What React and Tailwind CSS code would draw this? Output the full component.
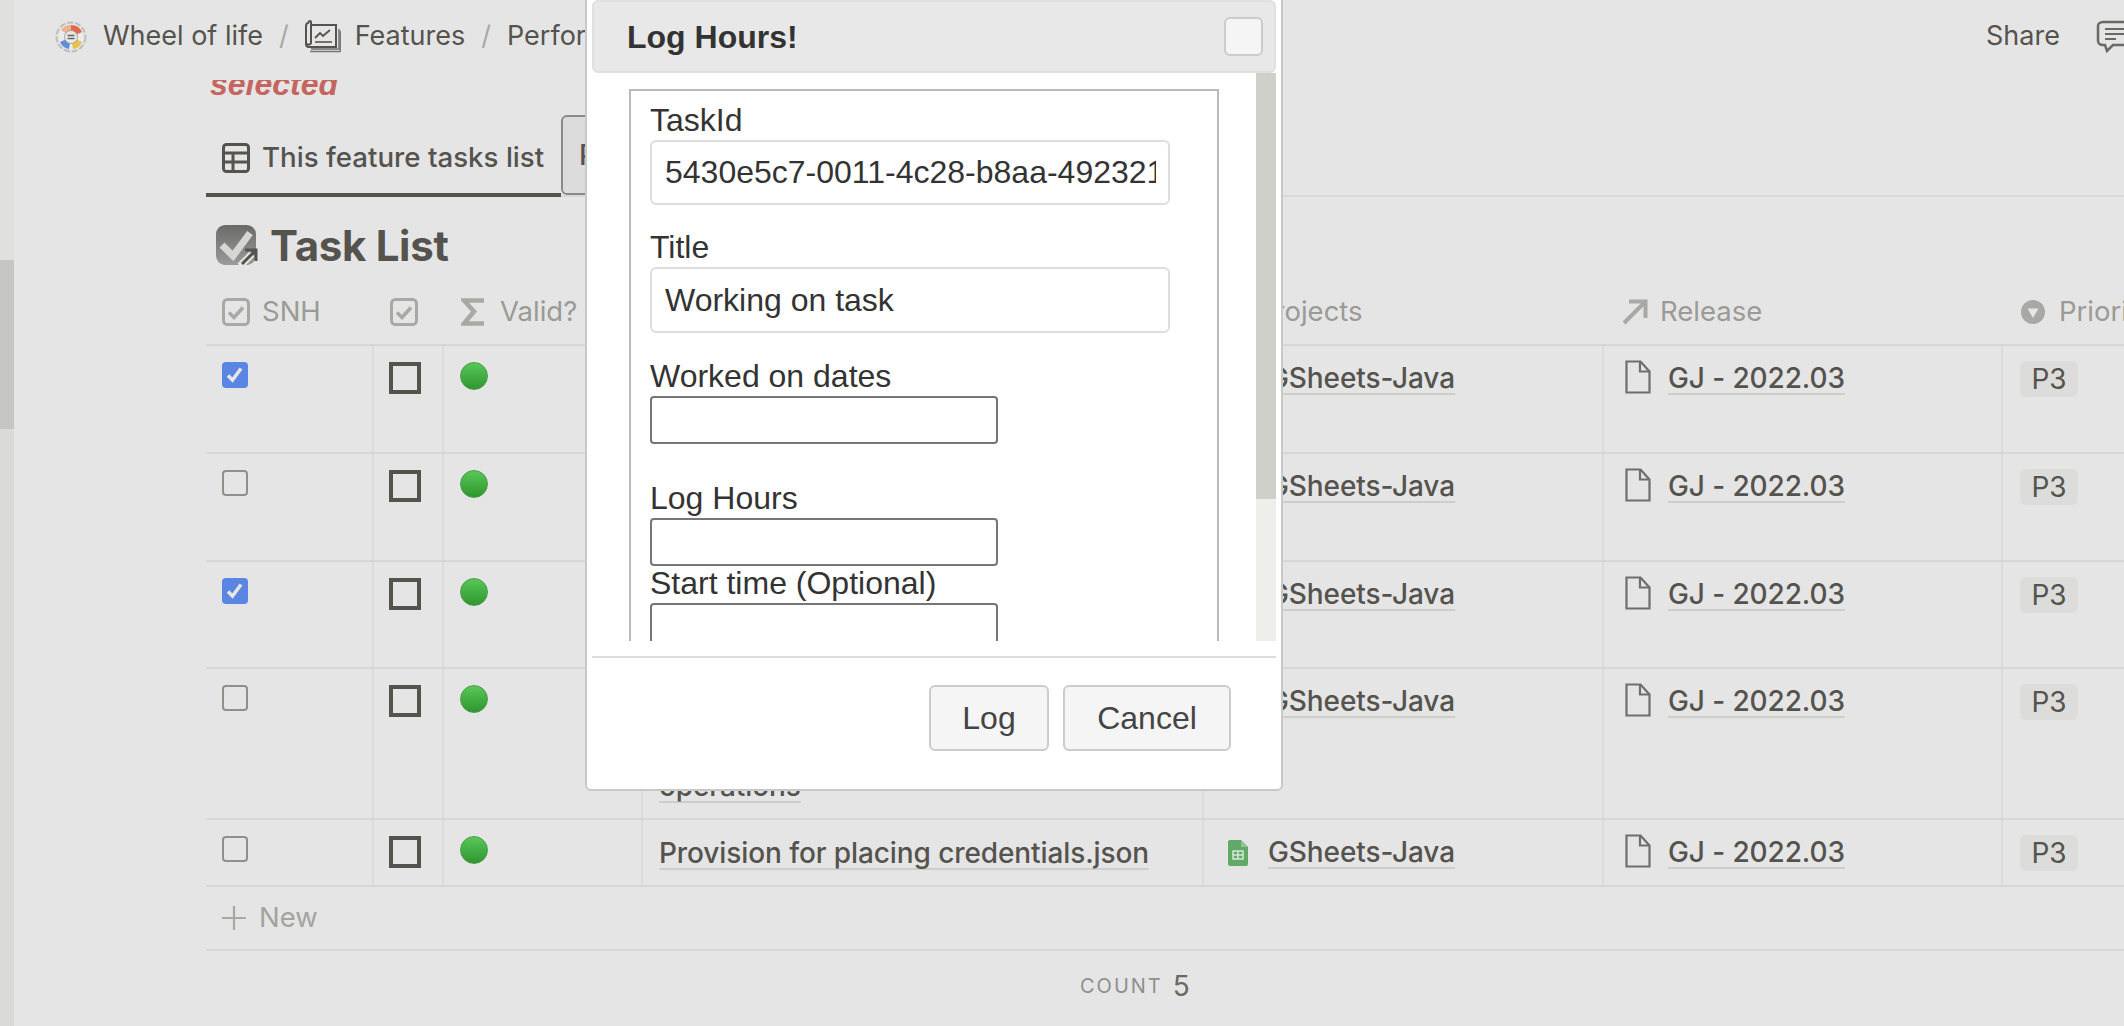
import { useState } from 'react'

const GRID = 'grid grid-cols-[168px_70px_199px_561px_400px_399px_1fr]'
const INTER = "font-['Inter',sans-serif]"
const ARIAL = "font-['Liberation_Sans',Arial,sans-serif]"

const CheckHeadIcon = () => (
  <svg width="28" height="28" viewBox="0 0 28 28" fill="none">
    <rect x="1.5" y="1.5" width="25" height="25" rx="4" stroke="#a8a8a5" strokeWidth="3" />
    <path d="M7 14.5l5 5 9-10" stroke="#a8a8a5" strokeWidth="3.5" />
  </svg>
)

const TableIcon = () => (
  <svg width="28" height="30" viewBox="0 0 28 30" fill="none" stroke="#55534e" strokeWidth="3">
    <rect x="1.5" y="1.5" width="25" height="27" rx="3" />
    <path d="M1.5 10h25M1.5 19h25M11 10v18.5" />
  </svg>
)

const WheelLogo = () => (
  <svg width="32" height="32" viewBox="0 0 32 32">
    <circle cx="16" cy="16" r="14.5" fill="none" stroke="#bdbdbb" strokeWidth="2" strokeDasharray="6 2" />
    <circle cx="16" cy="16" r="12" fill="#ececea" />
    <path d="M16 16L16 4A12 12 0 0 1 27 11Z" fill="#e2674c" />
    <path d="M16 16L6 9A12 12 0 0 1 16 4Z" fill="#efb08e" />
    <path d="M16 16L27 21A12 12 0 0 1 18 28Z" fill="#e9c24e" />
    <path d="M16 16L14 28A12 12 0 0 1 5 21Z" fill="#5f8fd6" />
    <circle cx="16" cy="16" r="6.5" fill="#e8e8e6" stroke="#999" strokeWidth="0.8" />
    <path d="M12.5 14.5h7M12.5 17.5h7" stroke="#666" strokeWidth="1.4" />
  </svg>
)

const FeaturesIcon = () => (
  <svg width="36" height="36" viewBox="0 0 36 36" fill="none">
    <path d="M6 30h28V10" stroke="#8a8a87" strokeWidth="2" />
    <path d="M5 32.5h30.5V12" stroke="#77777a" strokeWidth="1.5" />
    <path d="M3 4c-2 0-2 2-2 4v17c0 2 1 3 3 3h27V6H6V3C6 1.5 4 1.5 3 4Z" fill="#e6e6e6" stroke="#55534e" strokeWidth="2" />
    <path d="M6 6v18c0 1.500-2 2-5 1" stroke="#55534e" strokeWidth="2" />
    <path d="M10 19l5-5 3 3 7-6" stroke="#55534e" strokeWidth="1.8" />
    <path d="M10 23h17" stroke="#55534e" strokeWidth="1.6" />
  </svg>
)

const TaskListIcon = () => (
  <svg width="44" height="42" viewBox="0 0 44 42" fill="none">
    <defs>
      <linearGradient id="taskbox" x1="0" y1="0" x2="0" y2="1">
        <stop offset="0" stopColor="#6a6a68" />
        <stop offset="1" stopColor="#9a9a98" />
      </linearGradient>
    </defs>
    <rect x="0" y="0" width="40" height="40" rx="9" fill="url(#taskbox)" />
    <path d="M6 20l11 11L34 8" stroke="#d6d6d4" strokeWidth="7" />
    <path d="M24 41l12-12" stroke="#e6e6e6" strokeWidth="7" />
    <path d="M26 39l13-13M29 25h11v11" stroke="#55534e" strokeWidth="3" />
  </svg>
)

const SigmaIcon = () => (
  <svg width="24" height="28" viewBox="0 0 24 28" fill="none">
    <path d="M23 2.500H3l10 11L3 25.500h20" stroke="#a8a8a5" strokeWidth="4.500" />
  </svg>
)

const ArrowIcon = () => (
  <svg width="26" height="26" viewBox="0 0 26 26" fill="none">
    <path d="M2 24L23 3M7 2.500h16.500V19" stroke="#a8a8a5" strokeWidth="4" />
  </svg>
)

const PriorityIcon = () => (
  <svg width="24" height="24" viewBox="0 0 24 24">
    <circle cx="12" cy="12" r="12" fill="#a8a8a5" />
    <path d="M6.500 8.500h11L12 18Z" fill="#e6e6e6" />
  </svg>
)

const FileIcon = () => (
  <svg width="26" height="34" viewBox="0 0 26 34" fill="none" stroke="#6f6e6a" strokeWidth="2.200">
    <path d="M1.500 1.500h14l9 10v21h-23Z" />
    <path d="M15 1.500v10h9.500" />
  </svg>
)

const SheetIcon = () => (
  <svg width="20" height="26" viewBox="0 0 20 26">
    <path d="M2 0h11l7 7v17a2 2 0 0 1-2 2H2a2 2 0 0 1-2-2V2a2 2 0 0 1 2-2Z" fill="#62a968" />
    <path d="M13 0l7 7h-7Z" fill="#8fc695" />
    <path d="M5 11h10v8H5ZM5 15h10M10 11v8" fill="none" stroke="#d5e8d6" strokeWidth="1.500" />
  </svg>
)

const CommentIcon = () => (
  <svg width="36" height="34" viewBox="0 0 36 34" fill="none" stroke="#6a6965" strokeWidth="2.500" className="shrink-0">
    <path d="M7 2h24c3 0 4 2 4 4v15c0 2-1 4-4 4H17l-6 6-2-6H7c-3 0-5-2-5-4V6c0-2 2-4 5-4Z" />
    <path d="M9 9h19M9 14h19M9 19h11" strokeWidth="2" />
  </svg>
)

const GreenDot = () => (
  <div className="w-[28px] h-[28px] rounded-full border border-[#4a9d4a] bg-gradient-to-b from-[#57c857] to-[#2f962f]" />
)

const SnhBox = ({ checked }) => checked ? (
  <div className="w-[26px] h-[26px] rounded-[4px] bg-[#5a85e2] flex items-center justify-center">
    <svg width="20" height="20" viewBox="0 0 20 20" fill="none">
      <path d="M3 10.500l4.500 4.500L16 3.500" stroke="#e6e6e6" strokeWidth="3.500" />
    </svg>
  </div>
) : (
  <div className="w-[26px] h-[26px] rounded-[4px] border-2 border-[#8f8f8c]" />
)

const Linked = ({ children }) => (
  <span className="inline-block text-[28px] leading-[30px] tracking-[-0.1px] font-medium text-[#55534e] border-b-2 border-[#cdcdca]">{children}</span>
)

function TaskRow({ row }) {
  const cell = 'border-r-2 border-[#dbdbd9]'
  return (
    <div className={`${GRID} ${row.h} border-b-2 border-[#d6d6d4]`}>
      <div className={`${cell} pl-[16px] pt-[16px]`}><SnhBox checked={row.snh} /></div>
      <div className={`${cell} pl-[15px] pt-[16px]`}>
        <div className="w-[32px] h-[32px] border-[4px] border-[#55534e]" />
      </div>
      <div className={`${cell} pl-[16px] pt-[16px]`}><GreenDot /></div>
      <div className={`${cell} pl-[16px] flex flex-col justify-end pb-[15px]`}>
        {row.title && <div><Linked>{row.title}</Linked></div>}
      </div>
      <div className={`${cell} pl-[24px] pt-[14px]`}>
        <div className="flex items-start gap-[20px]">
          <div className="pt-[6px]"><SheetIcon /></div>
          <div className="pt-[3px]"><Linked>GSheets-Java</Linked></div>
        </div>
      </div>
      <div className={`${cell} pl-[21px] pt-[14px]`}>
        <div className="flex items-start gap-[17px]">
          <FileIcon />
          <div className="pt-[3px]"><Linked>GJ - 2022.03</Linked></div>
        </div>
      </div>
      <div className="pl-[17px] pt-[15px]">
        <span className="inline-block w-[58px] h-[36px] leading-[36px] text-center rounded-md bg-[#dcdcda] text-[28px] font-normal text-[#55534e]">P3</span>
      </div>
    </div>
  )
}

const ROWS = [
  { h: 'h-[108px]', snh: true },
  { h: 'h-[108px]', snh: false },
  { h: 'h-[107px]', snh: true },
  { h: 'h-[151px]', snh: false, title: 'operations' },
  { h: 'h-[67px]', snh: false, title: 'Provision for placing credentials.json' },
]

function FormField({ label, children, className = '' }) {
  return (
    <div className={className}>
      <div className="h-[36px] leading-[33px]">{label}</div>
      {children}
    </div>
  )
}

function LogHoursModal() {
  const [taskId] = useState('5430e5c7-0011-4c28-b8aa-49232186f0e1')
  const [title] = useState('Working on task')
  const soft = 'block w-[520px] rounded-md border-2 border-[#dddddd] bg-white pl-[13px] pr-[12px] text-[32px] text-[#333] outline-none'
  const plain = 'block w-[348px] h-[48px] rounded-[4px] border-2 border-[#767676] bg-white'

  return (
    <div className={`absolute left-[585px] top-[-6px] w-[698px] h-[797px] bg-white border-2 border-[#c8c8c8] rounded-md pt-[4px] px-[5px] flex flex-col text-[32px] text-[#333] ${ARIAL}`}>
      <div className="h-[73px] shrink-0 bg-[#e8e8e8] border-2 border-[#e0e0e0] rounded-md flex items-center justify-between pl-[33px] pr-[11px]">
        <span className="font-bold">Log Hours!</span>
        <button className="w-[39px] h-[39px] bg-[#f5f5f5] border-2 border-[#cccccc] rounded-md" />
      </div>

      <div className="h-[568px] shrink-0 flex overflow-hidden">
        <div className="flex-1 pl-[37px] pt-[16px]">
          <div className="w-[590px] h-[700px] border-2 border-[#bbbbbb] pl-[19px] pt-[13px]">
            <FormField label="TaskId">
              <input readOnly value={taskId} className={`${soft} h-[65px]`} />
            </FormField>
            <FormField label="Title" className="mt-[26px]">
              <input readOnly value={title} className={`${soft} h-[66px]`} />
            </FormField>
            <FormField label="Worked on dates" className="mt-[27px]">
              <input readOnly className={plain} />
            </FormField>
            <FormField label="Log Hours" className="mt-[38px]">
              <input readOnly className={plain} />
            </FormField>
            <FormField label="Start time (Optional)" className="mt-[1px]">
              <input readOnly className={plain} />
            </FormField>
          </div>
        </div>
        <div className="w-[20px] bg-[#eeeeeb]">
          <div className="h-[426px] bg-[#d0d0cb]" />
        </div>
      </div>

      <div className="mt-[15px] border-t-2 border-[#dddddd] flex justify-end gap-[14px] pt-[27px] pr-[45px]">
        <button className="w-[120px] h-[66px] bg-[#f5f5f5] border-2 border-[#cccccc] rounded-md text-[#444]">Log</button>
        <button className="w-[168px] h-[66px] bg-[#f5f5f5] border-2 border-[#cccccc] rounded-md text-[#444]">Cancel</button>
      </div>
    </div>
  )
}

export default function App() {
  return (
    <div className={`relative w-[2124px] h-[1026px] overflow-hidden flex bg-[#e5e5e5] ${INTER}`}>
      {/* page scrollbar on the left */}
      <div className="w-[14px] shrink-0 flex flex-col">
        <div className="h-[260px] bg-[#e0e0dd]" />
        <div className="h-[169px] bg-[#c6c6c2]" />
        <div className="flex-1 bg-[#dadad8]" />
      </div>

      <div className="flex-1 min-w-0 flex flex-col">
        {/* Breadcrumb */}
        <div className="h-[80px] shrink-0 flex items-center pl-[41px] pb-[7px] text-[27px] text-[#55534e]">
          <WheelLogo />
          <span className="ml-[16px]">Wheel of life</span>
          <span className="ml-[16px] text-[#a8a8a5]">/</span>
          <span className="ml-[16px]"><FeaturesIcon /></span>
          <span className="ml-[14px]">Features</span>
          <span className="ml-[16px] text-[#a8a8a5]">/</span>
          <span className="ml-[16px] w-[80px] overflow-hidden">Performance</span>
          <div className="ml-auto flex items-center gap-[36px] w-[138px] shrink-0 overflow-hidden">
            <span>Share</span>
            <CommentIcon />
          </div>
        </div>

        <div className="pl-[192px]">
          {/* clipped line of the scrolled content */}
          <div className={`h-[17px] overflow-hidden pl-[4px] ${ARIAL}`}>
            <div className="-mt-[12px] text-[32px] leading-[32px] font-bold italic text-[#c4655f]">selected</div>
          </div>

          {/* Tabs */}
          <div className="mt-[20px] h-[80px] flex items-end border-b-2 border-[#d9d9d9]">
            <div className="w-[355px] h-[67px] -mb-[2px] border-b-4 border-[#55534e] flex items-center gap-[12px] pl-[16px] pb-[8px] text-[27.7px] font-medium text-[#55534e]">
              <TableIcon />
              <span>This feature tasks list</span>
            </div>
            <div className="w-[60px] h-[80px] border-2 border-[#8a8a8a] rounded-md bg-[#dcdcdc] pl-[16px] flex items-center text-[28px] font-medium text-[#55534e]">P</div>
          </div>

          {/* Title */}
          <div className="h-[93px] flex items-center gap-[10px] pl-[10px] pt-[4px]">
            <TaskListIcon />
            <span className="text-[42px] font-bold tracking-[-0.3px] text-[#55534e]">Task List</span>
          </div>

          {/* Header row */}
          <div className={`${GRID} h-[56px] border-b-2 border-[#d6d6d4] text-[27.5px] text-[#9a9a97] items-center pb-[10px]`}>
            <div className="pl-[16px] flex items-center gap-[12px]"><CheckHeadIcon /><span>SNH</span></div>
            <div className="pl-[16px]"><CheckHeadIcon /></div>
            <div className="pl-[17px] flex items-center gap-[15px]"><SigmaIcon /><span>Valid?</span></div>
            <div />
            <div className="pl-[53px]">Projects</div>
            <div className="pl-[18px] flex items-center gap-[12px]"><ArrowIcon /><span>Release</span></div>
            <div className="pl-[18px] flex items-center gap-[14px] whitespace-nowrap"><PriorityIcon /><span>Priority</span></div>
          </div>

          {ROWS.map((row, i) => <TaskRow key={i} row={row} />)}

          {/* New */}
          <div className="h-[64px] border-b-2 border-[#d6d6d4] flex items-center gap-[13px] pl-[16px] text-[27.5px] text-[#a3a3a0]">
            <svg width="24" height="24" viewBox="0 0 24 24" stroke="#a8a8a5" strokeWidth="2.200"><path d="M12 0v24M0 12h24" /></svg>
            <span>New</span>
          </div>

          {/* Count */}
          <div className="h-[70px] flex items-center pl-[874px] gap-[10px] text-[#8f8f8c]">
            <span className="text-[20px] tracking-[2px]">COUNT</span>
            <span className="text-[28px] text-[#6a6965]">5</span>
          </div>
        </div>
      </div>

      <LogHoursModal />
    </div>
  )
}
